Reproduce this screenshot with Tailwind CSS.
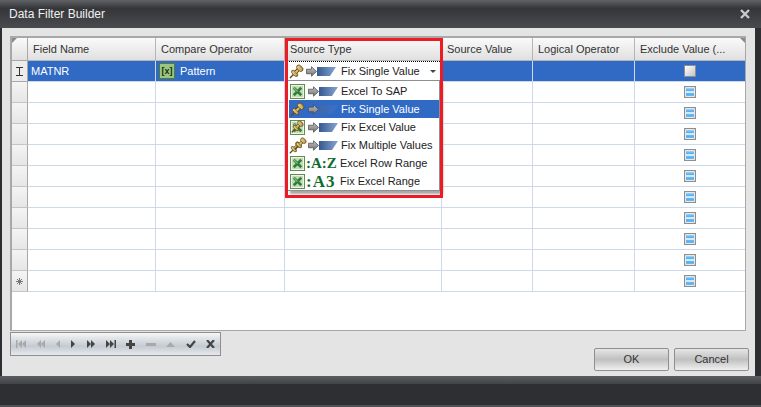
<!DOCTYPE html>
<html lang="en">
<head>
<meta charset="UTF-8">
<title>Data Filter Builder</title>
<script src="https://cdn.jsdelivr.net/npm/@tailwindcss/browser@4"></script>
</head>
<body class="w-[761px] h-[407px] overflow-hidden bg-[#2e2f33] font-['Liberation_Sans',sans-serif] text-[11px] text-[#333]">

<svg class="absolute h-0 w-0">
  <defs>
    <linearGradient id="wedge" x1="0" x2="1"><stop offset="0" stop-color="#35598f"/><stop offset="1" stop-color="#86a5d4"/></linearGradient>
    <linearGradient id="wedge-sel" x1="0" x2="1"><stop offset="0" stop-color="#3f68a8"/><stop offset="1" stop-color="#3a72c9"/></linearGradient>
    <linearGradient id="cb" x1="0" x2="0" y1="0" y2="1"><stop offset="0" stop-color="#a8d8fa"/><stop offset=".3" stop-color="#4aa8f0"/><stop offset=".4" stop-color="#cfeafd"/><stop offset=".65" stop-color="#cfeafd"/><stop offset=".7" stop-color="#4aa8f0"/><stop offset="1" stop-color="#6fbdf5"/></linearGradient>
    <linearGradient id="ar" x1="0" x2="0" y1="0" y2="1"><stop offset="0" stop-color="#c4c4c4"/><stop offset="1" stop-color="#707070"/></linearGradient>
    <linearGradient id="gold" x1="0" x2="1" y1="0" y2="1"><stop offset="0" stop-color="#f6e7b2"/><stop offset="1" stop-color="#b08428"/></linearGradient>
    <symbol id="pin" viewBox="0 0 16 16">
      <path d="M1 15L5 11" stroke="#5c4c24" stroke-width="1.600" fill="none"/>
      <ellipse cx="6" cy="10" rx="2" ry="4.200" transform="rotate(-45 6 10)" fill="url(#gold)" stroke="#5a4010" stroke-width=".8"/>
      <path d="M7 9L11 5" stroke="#5a4010" stroke-width="4"/>
      <path d="M7 9L11 5" stroke="#dcbc66" stroke-width="2.400"/>
      <ellipse cx="11.500" cy="4.500" rx="2.600" ry="4" transform="rotate(-45 11.500 4.500)" fill="url(#gold)" stroke="#5a4010" stroke-width=".8"/>
    </symbol>
    <symbol id="xl" viewBox="0 0 16 16">
      <rect x=".5" y=".5" width="15" height="15" fill="#f2f7ec" stroke="#5a8648"/>
      <rect x="2" y="2" width="12" height="12" fill="#c6dab4"/>
      <path d="M4 4l8 8M12 4l-8 8" stroke="#2a8038" stroke-width="2.800"/>
      <path d="M4 4l4 4" stroke="#7fbf86" stroke-width="1.200"/>
    </symbol>
    <symbol id="arrow" viewBox="0 0 12 12">
      <path d="M.5 3.500h5.500V.8l5.500 5.200-5.500 5.200V8.500H.5z" fill="url(#ar)" stroke="#4c4c4c" stroke-width=".8"/>
    </symbol>
    <symbol id="wedge-i" viewBox="0 0 19 9">
      <path d="M0 0H19L13 9H0Z" fill="url(#wedge)"/>
    </symbol>
    <symbol id="wedge-s" viewBox="0 0 19 9">
      <path d="M0 0H19L13 9H0Z" fill="url(#wedge-sel)"/>
    </symbol>
    <symbol id="chk" viewBox="0 0 12 12">
      <rect x=".6" y=".6" width="10.800" height="10.800" fill="#fff" stroke="#8e8e8e" stroke-width="1.200"/>
      <rect x="2" y="2" width="8" height="8" fill="url(#cb)"/>
    </symbol>
  </defs>
</svg>

<div class="flex h-full flex-col">
  <!-- title bar -->
  <div class="flex h-[28px] shrink-0 items-center justify-between bg-gradient-to-b from-[#606266] via-[#35363a] via-30% to-[#4a4b4f] px-[9px] text-[12px] text-[#f0f0f0]">
    <span>Data Filter Builder</span>
    <svg class="mr-[2px]" width="10" height="10" viewBox="0 0 10 10"><path d="M1 1l8 8M9 1l-8 8" stroke="#c8c8c8" stroke-width="2.400"/></svg>
  </div>

  <!-- dialog body -->
  <div class="relative ml-[2px] mr-[6px] flex h-[348px] shrink-0 flex-col bg-[#e4e4e4] px-[8px] pt-[8px]">
    <!-- grid -->
    <div class="h-[295px] w-[736px] border border-l-2 border-t-2 border-[#a8a8a8] bg-white">
      <div id="grid" class="grid grid-cols-[16px_128px_129px_157px_91px_102px_110px] grid-rows-[23px] auto-rows-[21px]">
        <div class="relative border-r border-b border-[#a8a8a8] bg-gradient-to-b from-[#fafafa] to-[#e0e0e0]">
          <svg class="absolute left-0 top-0" width="5" height="5"><path d="M0 0h5L0 5z" fill="#8a8a8a"/></svg>
        </div>
        <div class="flex items-center border-r border-b border-[#b5b5b5] bg-gradient-to-b from-[#fafafa] to-[#e0e0e0] pl-[5px]">Field Name</div>
        <div class="flex items-center border-r border-b border-[#b5b5b5] bg-gradient-to-b from-[#fafafa] to-[#e0e0e0] pl-[5px]">Compare Operator</div>
        <div class="flex items-center border-r border-b border-[#b5b5b5] bg-gradient-to-b from-[#fafafa] to-[#e0e0e0] pl-[5px]">Source Type</div>
        <div class="flex items-center border-r border-b border-[#b5b5b5] bg-gradient-to-b from-[#fafafa] to-[#e0e0e0] pl-[5px]">Source Value</div>
        <div class="flex items-center border-r border-b border-[#b5b5b5] bg-gradient-to-b from-[#fafafa] to-[#e0e0e0] pl-[5px]">Logical Operator</div>
        <div class="relative flex items-center border-b border-[#b5b5b5] bg-gradient-to-b from-[#fafafa] to-[#e0e0e0] pl-[5px]">
          Exclude Value (...
          <svg class="absolute right-0 top-0" width="5" height="5"><path d="M0 0h5v5z" fill="#8a8a8a"/></svg>
        </div>

        <!-- selected row -->
        <div class="flex items-center justify-center border-r border-b border-[#a8a8a8] bg-[#ececec]">
          <svg width="7" height="9" viewBox="0 0 7 9" fill="none" stroke="#333"><path d="M0 .5h7M0 8.500h7M3.500 0v9"/></svg>
        </div>
        <div class="flex items-center border-r border-b border-[#cdd9e8] bg-[#316ac5] pl-[3px] text-white">MATNR</div>
        <div class="flex items-center gap-[5px] border-r border-b border-[#cdd9e8] bg-[#316ac5] pl-[3px] text-white">
          <span class="flex h-[16px] w-[16px] items-center justify-center border border-[#4f7d3c] bg-[#9cc480] text-[9px] font-bold leading-none text-[#12330f]">[x]</span>
          Pattern
        </div>
        <div class="flex items-center border border-dotted border-black bg-white pl-[3px] pr-[5px] text-[#222]">
          <svg class="h-[15px] w-[15px]"><use href="#pin"/></svg>
          <svg class="ml-[2px] h-[11px] w-[11px]"><use href="#arrow"/></svg>
          <svg class="h-[9px] w-[19px]"><use href="#wedge-i"/></svg>
          <span class="ml-[5px] flex-1">Fix Single Value</span>
          <span class="h-0 w-0 border-x-[3px] border-t-[3px] border-x-transparent border-t-[#444]"></span>
        </div>
        <div class="border-r border-b border-[#cdd9e8] bg-[#316ac5]"></div>
        <div class="border-r border-b border-[#cdd9e8] bg-[#316ac5]"></div>
        <div class="flex items-center justify-center border-b border-[#cdd9e8] bg-[#316ac5]">
          <span class="h-[12px] w-[12px] border border-[#8e8e8e] bg-gradient-to-br from-[#ffffff] to-[#c4c4c4]"></span>
        </div>
      </div>
    </div>

    <!-- dropdown list -->
    <div class="absolute left-[285px] top-[52px] flex w-[153px] flex-col border border-[#8f8f8f] bg-white pt-[1px] pl-[1px] shadow-[3px_3px_2px_#a8a8a8] text-[#222]">
      <div class="flex h-[18px] items-center pl-[1px]"><svg class="h-[15px] w-[15px]"><use href="#xl"/></svg><svg class="ml-[3px] h-[11px] w-[11px]"><use href="#arrow"/></svg><svg class="h-[9px] w-[19px]"><use href="#wedge-i"/></svg><span class="ml-[3px]">Excel To SAP</span></div>
      <div class="flex h-[18px] items-center bg-[#316ac5] pl-[1px] text-white"><svg class="h-[15px] w-[15px]"><use href="#pin"/></svg><svg class="ml-[3px] h-[11px] w-[11px]"><use href="#arrow"/></svg><svg class="h-[9px] w-[19px]"><use href="#wedge-s"/></svg><span class="ml-[3px]">Fix Single Value</span></div>
      <div class="flex h-[18px] items-center pl-[1px]"><span class="relative h-[15px] w-[15px]"><svg class="h-[15px] w-[15px]"><use href="#xl"/></svg><svg class="absolute left-[1px] top-0 h-[13px] w-[13px]"><use href="#pin"/></svg></span><svg class="ml-[3px] h-[11px] w-[11px]"><use href="#arrow"/></svg><svg class="h-[9px] w-[19px]"><use href="#wedge-i"/></svg><span class="ml-[3px]">Fix Excel Value</span></div>
      <div class="flex h-[18px] items-center pl-[1px]"><span class="relative h-[15px] w-[15px]"><svg class="absolute -left-[1px] top-[3px] h-[13px] w-[13px]"><use href="#pin"/></svg><svg class="absolute left-[4px] -top-[1px] h-[13px] w-[13px]"><use href="#pin"/></svg></span><svg class="ml-[3px] h-[11px] w-[11px]"><use href="#arrow"/></svg><svg class="h-[9px] w-[19px]"><use href="#wedge-i"/></svg><span class="ml-[3px]">Fix Multiple Values</span></div>
      <div class="flex h-[18px] items-center pl-[1px]"><svg class="h-[15px] w-[15px]"><use href="#xl"/></svg><span class="ml-[1px] w-[34px] font-['Liberation_Serif',serif] text-[15px] font-bold leading-none text-[#0f6b2d]">:A:Z</span><span>Excel Row Range</span></div>
      <div class="flex h-[18px] items-center pl-[1px]"><svg class="h-[15px] w-[15px]"><use href="#xl"/></svg><span class="ml-[1px] w-[34px] font-['Liberation_Serif',serif] text-[17px] font-bold leading-none tracking-[1px] text-[#0f6b2d]">:A3</span><span>Fix Excel Range</span></div>
    </div>

    <!-- red highlight -->
    <div class="pointer-events-none absolute left-[283px] top-[10px] h-[160px] w-[158px] border-[3px] border-[#ed1c24]"></div>

    <!-- bottom row -->
    <div class="mt-[1px] flex flex-1 items-start justify-between">
      <div class="flex h-[24px] w-[211px] items-center justify-between border border-[#8f8f8f] bg-gradient-to-b from-[#f5f6f7] via-[#c3cbd2] via-60% to-[#e6e9ec] px-[5px]">
        <svg width="10" height="8" viewBox="0 0 10 8" fill="#a9a9a9"><path d="M0 0h1.500v8H0zM6 0v8L2 4zM10 0v8L6 4z"/></svg>
        <svg width="9" height="8" viewBox="0 0 9 8" fill="#a9a9a9"><path d="M5 0v8L1 4zM9 0v8L5 4z"/></svg>
        <svg width="5" height="8" viewBox="0 0 5 8" fill="#a9a9a9"><path d="M4 0v8L0 4z"/></svg>
        <svg width="5" height="8" viewBox="0 0 5 8" fill="#444"><path d="M0 0v8l4-4z"/></svg>
        <svg width="9" height="8" viewBox="0 0 9 8" fill="#444"><path d="M0 0v8l4-4zM4 0v8l4-4z"/></svg>
        <svg width="10" height="8" viewBox="0 0 10 8" fill="#444"><path d="M0 0v8l4-4zM4 0v8l4-4zM8.500 0H10v8H8.500z"/></svg>
        <svg width="9" height="9" viewBox="0 0 9 9" fill="#444"><path d="M3 0h3v3h3v3H6v3H3V6H0V3h3z"/></svg>
        <svg width="10" height="3" viewBox="0 0 10 3" fill="#a9a9a9"><path d="M0 0h10v3H0z"/></svg>
        <svg width="9" height="5" viewBox="0 0 9 5" fill="#a9a9a9"><path d="M4.500 0L9 5H0z"/></svg>
        <svg width="10" height="8" viewBox="0 0 10 8" fill="none" stroke="#444" stroke-width="2.200"><path d="M1 4l3 3 5-6"/></svg>
        <svg width="9" height="8" viewBox="0 0 9 8" fill="none" stroke="#444" stroke-width="2.200"><path d="M1 0l7 8M8 0L1 8"/></svg>
      </div>
      <div class="-mr-[2px] mt-[16px] flex gap-[5px]">
        <button class="h-[23px] w-[75px] rounded-[2px] border border-[#8f8f8f] bg-gradient-to-b from-[#e6e6e6] via-[#c0c0c0] to-[#f0f0f0] text-[#333]">OK</button>
        <button class="h-[23px] w-[75px] rounded-[2px] border border-[#8f8f8f] bg-gradient-to-b from-[#e6e6e6] via-[#c0c0c0] to-[#f0f0f0] text-[#333]">Cancel</button>
      </div>
    </div>
  </div>

  <!-- status strip -->
  <div class="h-[8px] shrink-0 bg-gradient-to-b from-[#5c5e62] to-[#414347]"></div>
  <div class="flex-1 border-b-2 border-[#505256] bg-[#2e2f33]"></div>
</div>

<script>
  // fill the empty rows of the grid
  const grid = document.getElementById('grid');
  const headCell = 'border-r border-b border-r-[#a8a8a8] border-b-[#c4c4c4] bg-gradient-to-b from-[#f4f4f4] to-[#e6e6e6] flex items-center justify-center';
  const cell = 'border-r border-b border-[#cdd9e8]';
  const last = 'border-b border-[#cdd9e8] flex items-center justify-center';
  const star = '<svg width="9" height="9" viewBox="0 0 9 9" stroke="#777"><path d="M4.500 1v7M1 4.500h7M2 2l5 5M7 2l-5 5"/></svg>';
  for (let i = 0; i < 10; i++) {
    let html = `<div class="${headCell}">${i === 9 ? star : ''}</div>`;
    for (let c = 0; c < 5; c++) html += `<div class="${cell}"></div>`;
    html += `<div class="${last}"><svg class="h-[12px] w-[12px]"><use href="#chk"/></svg></div>`;
    grid.insertAdjacentHTML('beforeend', html);
  }
</script>
</body>
</html>
